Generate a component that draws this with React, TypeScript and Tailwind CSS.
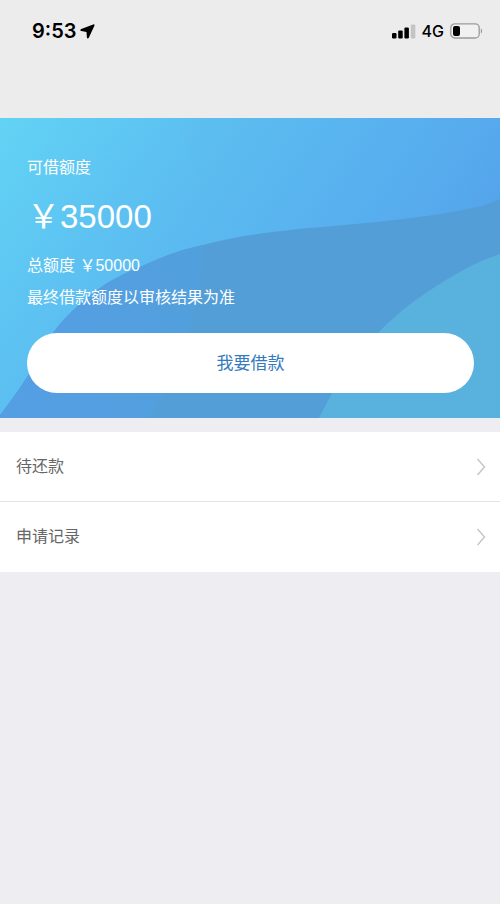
interface MenuItem {
  label: string;
  href: string;
}

const MENU: MenuItem[] = [
  { label: '待还款', href: '#repay' },
  { label: '申请记录', href: '#records' },
];

function StatusBar() {
  return (
    <header className="h-[118px] bg-[#ececec] pt-[15px] pl-8 pr-4 text-black">
      <div className="flex h-8 items-center justify-between">
        <div className="flex items-center gap-1 font-['Inter','Liberation_Sans',sans-serif] text-xl font-semibold">
          <time>9:53</time>
          <svg className="h-[15px] w-[15px]" viewBox="0 0 15 15" fill="currentColor" aria-hidden="true">
            <path d="M13.2.4 1.2 5c-1.2.5-1.1 1.9.1 2.1l5.2 1 .4 5.4c.1 1.2 1.4 1.3 1.9.3L14.4 1.7c.4-.9-.3-1.6-1.2-1.3Z" />
          </svg>
        </div>
        <div className="flex items-center gap-[6px]">
          <svg className="h-4 w-6" viewBox="0 0 24 16" fill="currentColor" aria-hidden="true">
            <rect x="0" y="10" width="4.5" height="5.4" rx="1.2" />
            <rect x="6.2" y="7.4" width="4.5" height="8" rx="1.2" />
            <rect x="12.4" y="4.4" width="4.5" height="11" rx="1.2" />
            <rect x="18.8" y="1.4" width="4.5" height="14" rx="1.2" fill="#c4c4c4" />
          </svg>
          <span className="font-['Inter','Liberation_Sans',sans-serif] text-base font-medium">4G</span>
          <svg className="h-4 w-[34px]" viewBox="0 0 34 16" aria-hidden="true">
            <rect x=".8" y=".8" width="28.4" height="14.2" rx="4" fill="#f1f1f1" stroke="#9b9b9b" strokeWidth="1.3" />
            <rect x="3" y="3" width="7" height="10" rx="2" fill="#000" />
            <path d="M30.8 5.5c1.8.7 1.8 4.3 0 5Z" fill="#9b9b9b" />
          </svg>
        </div>
      </div>
    </header>
  );
}

function BannerWaves() {
  return (
    <svg className="absolute inset-0 h-full w-full" viewBox="0 0 500 300" preserveAspectRatio="none" aria-hidden="true">
      <defs>
        <linearGradient id="sky" gradientUnits="userSpaceOnUse" x1="0" y1="0" x2="420" y2="280">
          <stop offset="0" stopColor="#62d3f4" />
          <stop offset=".35" stopColor="#5cbef0" />
          <stop offset=".75" stopColor="#57adee" />
          <stop offset="1" stopColor="#53a0ea" />
        </linearGradient>
        <linearGradient id="left" gradientUnits="userSpaceOnUse" x1="0" y1="0" x2="200" y2="160">
          <stop offset="0" stopColor="#62d3f4" />
          <stop offset=".5" stopColor="#5dc4f3" />
          <stop offset="1" stopColor="#5ab6f0" />
        </linearGradient>
        <linearGradient id="leftWave" x1="0" y1="0" x2="1" y2="0">
          <stop offset="0" stopColor="#549fe4" />
          <stop offset="1" stopColor="#529fdd" />
        </linearGradient>
        <clipPath id="wave">
          <path d="M500 81C487 87 478 89 467 91C430 99 378 104 333 108C284 112 240 117 207 126C175 133 160 140 140 149C123 156 111 162 100 170C79 185 62 202 53 215C42 231 38 243 27 259C18 273 8 287 0 297V300H500Z" />
        </clipPath>
      </defs>
      <rect width="500" height="300" fill="url(#sky)" />
      <path d="M0 0H172C190 27 202 70 203 120C204 180 182 244 150 300H0Z" fill="url(#left)" opacity=".5" />
      <g clipPath="url(#wave)">
        <rect width="500" height="300" fill="#549ed7" />
        <path d="M0 0H172C190 27 202 70 203 120C204 180 182 244 150 300H0Z" fill="url(#leftWave)" />
      </g>
      <path d="M500 136C489 140 478 144 467 150C452 158 437 167 423 177C404 190 389 203 378 215C360 235 341 258 332 275L319 300H500Z" fill="#59b1de" />
    </svg>
  );
}

function LoanBanner() {
  return (
    <section className="relative pt-[34px] pr-[26px] pb-[25px] pl-[27px] text-white">
      <BannerWaves />
      <div className="relative">
        <h1 className="text-base leading-8">可借额度</h1>
        <p className="my-[7px] text-[33px] leading-[52px]">￥35000</p>
        <p className="text-base leading-8">总额度 ￥50000</p>
        <p className="text-base leading-8">最终借款额度以审核结果为准</p>
        <button type="button" className="mt-[19px] h-[60px] w-full rounded-full bg-white pt-[2px] text-[17px] text-[#357abd]">
          我要借款
        </button>
      </div>
    </section>
  );
}

export default function App() {
  return (
    <div className="min-h-screen bg-[#ededf2] font-['Liberation_Sans','Noto_Sans_CJK_SC',sans-serif]">
      <StatusBar />
      <main>
        <LoanBanner />
        <nav className="mt-[14px] divide-y divide-[#e4e4e6] bg-white">
          {MENU.map((item) => (
            <a key={item.href} href={item.href} className="flex h-[70px] items-center justify-between pr-[14px] pl-4 text-base text-[#666]">
              {item.label}
              <svg className="h-[18px] w-[10px]" viewBox="0 0 10 18" fill="none" stroke="#c4c4c6" strokeWidth="1.4" aria-hidden="true">
                <path d="m1.5 1 7 8-7 8" />
              </svg>
            </a>
          ))}
        </nav>
      </main>
    </div>
  );
}
